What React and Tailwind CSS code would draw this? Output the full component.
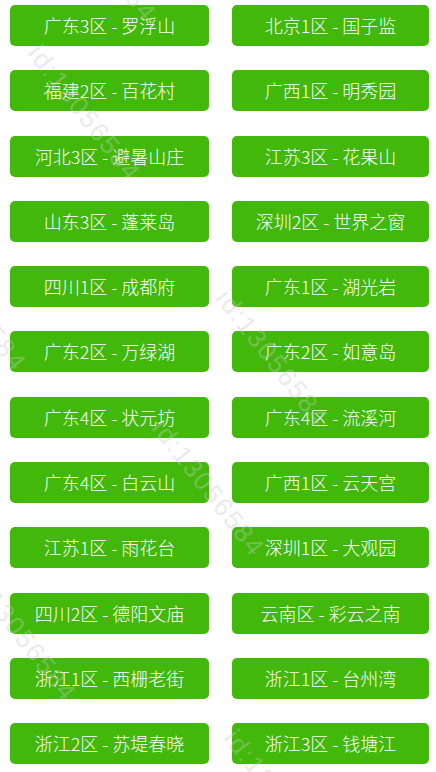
import React from "react";

const areas = [
  ["广东3区", "罗浮山"],
  ["北京1区", "国子监"],
  ["福建2区", "百花村"],
  ["广西1区", "明秀园"],
  ["河北3区", "避暑山庄"],
  ["江苏3区", "花果山"],
  ["山东3区", "蓬莱岛"],
  ["深圳2区", "世界之窗"],
  ["四川1区", "成都府"],
  ["广东1区", "湖光岩"],
  ["广东2区", "万绿湖"],
  ["广东2区", "如意岛"],
  ["广东4区", "状元坊"],
  ["广东4区", "流溪河"],
  ["广东4区", "白云山"],
  ["广西1区", "云天宫"],
  ["江苏1区", "雨花台"],
  ["深圳1区", "大观园"],
  ["四川2区", "德阳文庙"],
  ["云南区", "彩云之南"],
  ["浙江1区", "西栅老街"],
  ["浙江1区", "台州湾"],
  ["浙江2区", "苏堤春晓"],
  ["浙江3区", "钱塘江"],
];

// faint diagonal watermark marks
const marks = [
  { left: 44, top: 40 },
  { left: 60, top: -120 },
  { left: -70, top: 230 },
  { left: 168, top: 415 },
  { left: 232, top: 285 },
  { left: -20, top: 560 },
  { left: 240, top: 725 },
];

export default function App() {
  return (
    <div
      className="relative w-[436px] h-[772px] bg-white overflow-hidden"
      style={{ fontFamily: '"Noto Sans CJK SC", "Noto Sans", sans-serif' }}
    >
      <div className="grid grid-cols-[199px_197px] gap-x-[23px] gap-y-[24.3px] pl-[10px] pt-[5px]">
        {areas.map(([zone, name], i) => (
          <div
            key={i}
            className="h-[41px] rounded-[5px] bg-[#41b80a] flex items-center justify-center text-white text-[18px] font-light"
          >
            {zone}&nbsp;-&nbsp;{name}
          </div>
        ))}
      </div>

      {marks.map((m, i) => (
        <div
          key={i}
          className="absolute pointer-events-none text-[26px] leading-none tracking-[2px] text-[rgba(200,200,200,0.4)] whitespace-nowrap rotate-[52deg] origin-top-left"
          style={{ left: m.left, top: m.top, fontFamily: '"Liberation Sans", sans-serif' }}
        >
          id:13056584
        </div>
      ))}
    </div>
  );
}
